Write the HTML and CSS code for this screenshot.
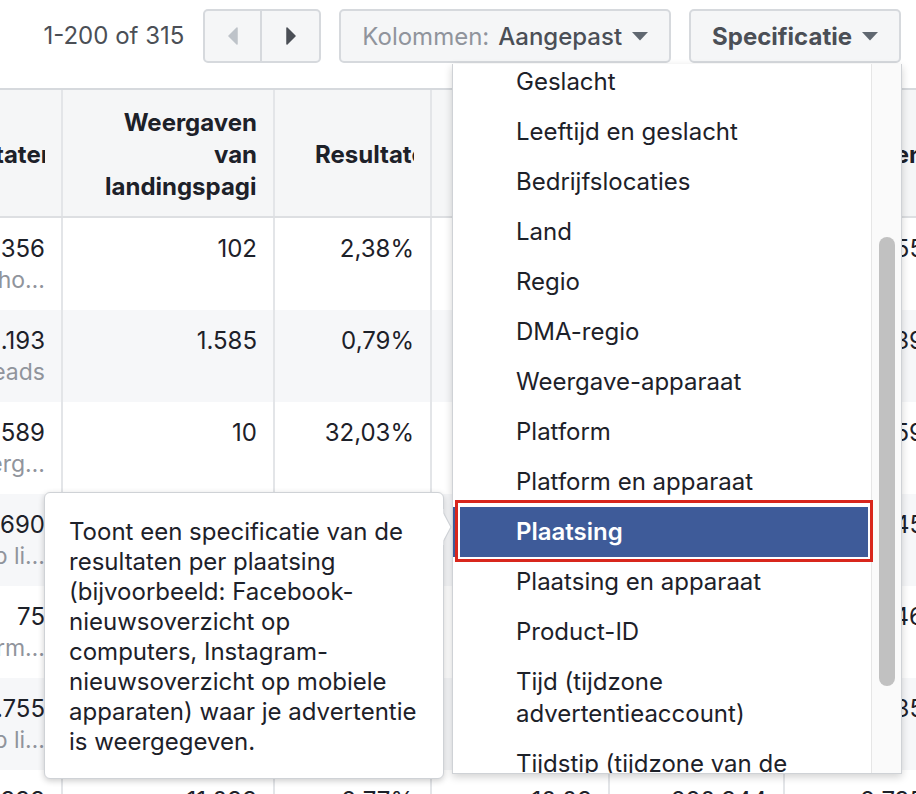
FILE: index.html
```html
<!DOCTYPE html>
<html lang="nl">
<head>
<meta charset="utf-8">
<title>Advertentiebeheer</title>
<link rel="stylesheet" href="styles.css">
</head>
<body>
<div class="page">
  <div class="toolbar">
    <span class="count">1-200 of 315</span>
    <div class="pager">
      <span class="pg pg-prev"><svg width="10" height="18" viewBox="0 0 10 18"><polygon points="9,1 9,17 1,9" fill="#bec3c9" stroke="#bec3c9" stroke-width="1.5" stroke-linejoin="round"/></svg></span>
      <span class="pg pg-next"><svg width="10" height="18" viewBox="0 0 10 18"><polygon points="1,1 1,17 9,9" fill="#4b4f56" stroke="#4b4f56" stroke-width="1.5" stroke-linejoin="round"/></svg></span>
    </div>
    <span class="btn"><span class="muted">Kolommen:</span><span class="strong">Aangepast</span><svg class="caret" width="16" height="9" viewBox="0 0 16 9"><polygon points="0,0 16,0 8,8.5" fill="#606770"/></svg></span>
    <span class="btn btn-bold">Specificatie<svg class="caret" width="16" height="9" viewBox="0 0 16 9"><polygon points="0,0 16,0 8,8.5" fill="#606770"/></svg></span>
  </div>

  <div class="table">
    <div class="row head">
      <div class="cell"><div class="hclip hc-a">Resultaten</div></div>
      <div class="cell"><div class="hclip hc-b">Weergaven van landingspagina's</div></div>
      <div class="cell"><div class="hclip hc-c">Resultaten­ranking</div></div>
      <div class="cell"><div class="hclip hc-d">Kosten per resultaat</div></div>
      <div class="cell"><div class="hclip hc-d">Bereik</div></div>
      <div class="cell"><div class="hclip hc-f">Uitgaven</div></div>
    </div>
    <div class="row">
      <div class="cell"><span class="val">1.356</span><span class="sub">Aankopen in webshop via websho…</span></div>
      <div class="cell"><span class="val">102</span></div>
      <div class="cell"><span class="val">2,38%</span></div>
      <div class="cell"><span class="val">4,12</span></div>
      <div class="cell"><span class="val">120.433</span></div>
      <div class="cell"><span class="val">2,555</span></div>
    </div>
    <div class="row alt">
      <div class="cell"><span class="val">11.193</span><span class="sub">Leads</span></div>
      <div class="cell"><span class="val">1.585</span></div>
      <div class="cell"><span class="val">0,79%</span></div>
      <div class="cell"><span class="val">8,02</span></div>
      <div class="cell"><span class="val">98.120</span></div>
      <div class="cell"><span class="val">2,339</span></div>
    </div>
    <div class="row">
      <div class="cell"><span class="val">1.589</span><span class="sub">Berichtweerg…</span></div>
      <div class="cell"><span class="val">10</span></div>
      <div class="cell"><span class="val">32,03%</span></div>
      <div class="cell"><span class="val">0,41</span></div>
      <div class="cell"><span class="val">54.877</span></div>
      <div class="cell"><span class="val">2,559</span></div>
    </div>
    <div class="row alt">
      <div class="cell"><span class="val">2.690</span><span class="sub">Klikken op li…</span></div>
      <div class="cell"><span class="val">488</span></div>
      <div class="cell"><span class="val">1,20%</span></div>
      <div class="cell"><span class="val">0,88</span></div>
      <div class="cell"><span class="val">74.260</span></div>
      <div class="cell"><span class="val">2,745</span></div>
    </div>
    <div class="row">
      <div class="cell"><span class="val">75</span><span class="sub">Leads via form…</span></div>
      <div class="cell"><span class="val">12</span></div>
      <div class="cell"><span class="val">0,54%</span></div>
      <div class="cell"><span class="val">9,80</span></div>
      <div class="cell"><span class="val">11.482</span></div>
      <div class="cell"><span class="val">2,546</span></div>
    </div>
    <div class="row alt">
      <div class="cell"><span class="val">1.755</span><span class="sub">Klikken op li…</span></div>
      <div class="cell"><span class="val">301</span></div>
      <div class="cell"><span class="val">3,15%</span></div>
      <div class="cell"><span class="val">1,02</span></div>
      <div class="cell"><span class="val">66.019</span></div>
      <div class="cell"><span class="val">2,735</span></div>
    </div>
    <div class="row">
      <div class="cell"><span class="val">4.333</span><span class="sub">Websiteaankopen</span></div>
      <div class="cell"><span class="val">11.033</span></div>
      <div class="cell"><span class="val">2,77%</span></div>
      <div class="cell"><span class="val">10,03</span></div>
      <div class="cell"><span class="val">220.344</span></div>
      <div class="cell"><span class="val">2,735</span></div>
    </div>
  </div>

  <div class="dropdown">
    <div class="menu">
      <div class="item">Geslacht</div>
      <div class="item">Leeftijd en geslacht</div>
      <div class="item">Bedrijfslocaties</div>
      <div class="item">Land</div>
      <div class="item">Regio</div>
      <div class="item">DMA-regio</div>
      <div class="item">Weergave-apparaat</div>
      <div class="item">Platform</div>
      <div class="item">Platform en apparaat</div>
      <div class="item item-selected">Plaatsing</div>
      <div class="item">Plaatsing en apparaat</div>
      <div class="item">Product-ID</div>
      <div class="item">Tijd (tijdzone<br>advertentieaccount)</div>
      <div class="item">Tijdstip (tijdzone van de<br>weergave)</div>
    </div>
    <div class="track"><div class="thumb"></div></div>
  </div>

  <div class="highlight"></div>

  <div class="tooltip">
    <p class="tip-text">Toont een specificatie van de resultaten per plaatsing (bijvoorbeeld: Facebook-<br>nieuwsoverzicht op computers, Instagram-<br>nieuwsoverzicht op mobiele apparaten) waar je advertentie is weergegeven.</p>
    <svg class="tip-arrow" width="10" height="36" viewBox="0 0 10 36"><polygon points="0,1 9,18 0,35" fill="#fff" stroke="#cfd2d6" stroke-width="1.2"/><rect x="0" y="0" width="1.3" height="36" fill="#fff"/></svg>
  </div>
</div>
</body>
</html>
```

FILE: styles.css
```css
* { box-sizing: border-box; }

html, body {
  margin: 0;
  padding: 0;
  background: #fff;
}

body {
  font-family: Inter, "Liberation Sans", Arial, sans-serif;
  font-size: 24px;
  color: #1d2129;
}

.page {
  position: relative;
  width: 916px;
  height: 794px;
  overflow: hidden;
}

/* toolbar */
.toolbar {
  height: 88px;
  display: flex;
  align-items: flex-start;
  justify-content: flex-end;
  gap: 18px;
  padding: 9px 15px 0 0;
}

.count {
  height: 54px;
  line-height: 54px;
  color: #4b4f56;
  margin-right: 1px;
}

.pager {
  display: flex;
  height: 54px;
  border: 2px solid #d6d9dd;
  border-radius: 5px;
  background: #f5f6f7;
}

.pg {
  width: 57px;
  display: flex;
  align-items: center;
  justify-content: center;
}

.pg-prev {
  border-right: 2px solid #d6d9dd;
}

.btn {
  height: 54px;
  display: flex;
  align-items: center;
  padding: 0 21px;
  border: 2px solid #d6d9dd;
  border-radius: 5px;
  background: #f5f6f7;
  color: #4b4f56;
}

.btn .muted {
  color: #90949c;
  margin-right: 9px;
}

.btn .strong {
  font-weight: 500;
  color: #4b4f56;
}

.btn-bold {
  font-weight: 700;
}

.caret {
  margin-left: 10px;
}

/* table */
.table {
  border-top: 2px solid #d6d9dd;
  width: 948px;
}

.row {
  display: grid;
  grid-template-columns: 63px 212px 157px 178px 175px 157px;
  height: 92px;
}

.row.alt {
  background: #f6f7f9;
}

.row.head {
  height: 128px;
  background: #f5f6f7;
  border-bottom: 2px solid #dddfe2;
}

.cell {
  border-right: 2px solid #e3e5e8;
  display: flex;
  flex-direction: column;
  align-items: flex-end;
  padding: 16px 16px 0 0;
  min-width: 0;
}

.head .cell {
  flex-direction: row;
  justify-content: flex-end;
  align-items: center;
  padding: 4px 16px 0 0;
}

.hclip {
  font-weight: 700;
  line-height: 32px;
  text-align: right;
  overflow: hidden;
  flex-shrink: 0;
  color: #1d2129;
}

.hc-a { width: 115px; white-space: nowrap; text-align: left; }
.hc-b { width: 152px; }
.hc-c { width: 99px; white-space: nowrap; text-align: left; }
.hc-d { width: 140px; }
.hc-f { width: 110px; white-space: nowrap; }

.val {
  line-height: 30px;
  white-space: nowrap;
  flex-shrink: 0;
}

.sub {
  line-height: 28px;
  margin-top: 2px;
  color: #90949c;
  white-space: nowrap;
  flex-shrink: 0;
  font-size: 23px;
}

/* dropdown */
.dropdown {
  position: absolute;
  left: 452px;
  top: 64px;
  width: 450px;
  height: 710px;
  background: #fff;
  border: 1px solid #cfd2d6;
  border-top: 0;
  box-shadow: 0 3px 8px rgba(0, 0, 0, 0.18);
  display: flex;
  overflow: hidden;
}

.menu {
  flex: 1;
  margin-top: -7px;
}

.item {
  padding: 9px 16px 9px 63px;
  line-height: 32px;
  color: #1d2129;
  white-space: nowrap;
}

.item-selected {
  background: #3e5b99;
  color: #fff;
  font-weight: 600;
}

.track {
  width: 30px;
  border-left: 1px solid #e6e6e6;
  background: #fafafa;
  padding-top: 173px;
}

.thumb {
  width: 16px;
  height: 449px;
  margin: 0 auto;
  border-radius: 8px;
  background: #c1c1c1;
}

.highlight {
  position: absolute;
  left: 455px;
  top: 500px;
  width: 418px;
  height: 62px;
  border: 3.5px solid #d8261c;
  box-shadow: inset 0 0 0 2px #fff;
}

/* tooltip */
.tooltip {
  position: absolute;
  left: 44px;
  top: 492px;
  width: 400px;
  height: 287px;
  background: #fff;
  border: 1px solid #cfd2d6;
  border-radius: 6px;
  box-shadow: 0 2px 6px rgba(0, 0, 0, 0.2);
  padding: 24px 20px 0 24px;
}

.tip-text {
  margin: 0;
  line-height: 30px;
  color: #1d2129;
}

.tip-arrow {
  position: absolute;
  right: -9px;
  top: 16px;
}
```
